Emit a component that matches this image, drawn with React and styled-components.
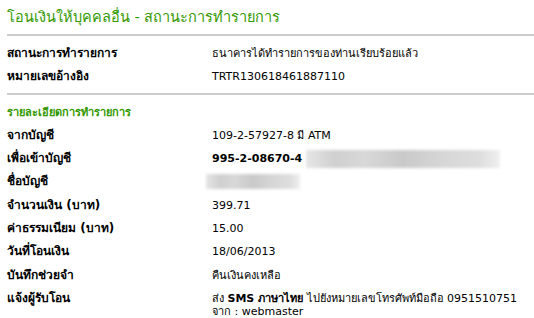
import React from "react";
import styled, { createGlobalStyle } from "styled-components";

const Global = createGlobalStyle`
  html, body { margin: 0; padding: 0; background: #fff; }
  body { font-family: "DejaVu Sans", Tahoma, sans-serif; font-size: 11px; color: #000; }
`;

const Page = styled.div`
  padding: 6px 0 0 7px;
  width: 527px;
`;

const Title = styled.h1`
  margin: 0;
  height: 28px;
  font-size: 14.5px;
  font-weight: normal;
  line-height: 22px;
  color: #339900;
`;

const Divider = styled.div`
  height: 2px;
  background: #cccccc;
`;

const Rows = styled.div`
  display: flex;
  flex-direction: column;
  padding: ${(p) => p.$pad || "6px 0 4px"};
`;

const Row = styled.div`
  display: grid;
  grid-template-columns: 205px 1fr;
  align-items: ${(p) => (p.$tall ? "start" : "center")};
  height: ${(p) => (p.$tall ? "auto" : "23.3px")};
  padding-top: ${(p) => (p.$tall ? "5px" : "0")};
  line-height: 13px;
`;

const Label = styled.div`
  font-weight: bold;
  font-size: 12px;
`;

const Value = styled.div`
  display: flex;
  flex-direction: column;
  font-weight: ${(p) => (p.$bold ? "bold" : "normal")};
`;

const Line = styled.div`
  display: flex;
  align-items: center;
  gap: 4px;
  height: 13px;
`;

const Section = styled.div`
  display: flex;
  align-items: center;
  height: 23px;
  font-weight: bold;
  font-size: 11px;
  color: #339900;
`;

const Blur = styled.span`
  display: inline-block;
  flex: none;
  width: ${(p) => p.$w}px;
  height: ${(p) => p.$h || 17}px;
  margin-left: ${(p) => p.$ml || 0}px;
  background: linear-gradient(
    90deg,
    #e6e6e6 0%,
    #cfcfcf 15%,
    #d8d8d8 30%,
    #c9c9c9 50%,
    #d6d6d6 70%,
    #dedede 90%,
    #f0f0f0 100%
  );
  filter: blur(1.5px);
`;

const B = styled.b`
  font-weight: bold;
`;

export default function App() {
  return (
    <>
      <Global />
      <Page>
        <Title>โอนเงินให้บุคคลอื่น - สถานะการทำรายการ</Title>
        <Divider />
        <Rows>
          <Row>
            <Label>สถานะการทำรายการ</Label>
            <Value>ธนาคารได้ทำรายการของท่านเรียบร้อยแล้ว</Value>
          </Row>
          <Row>
            <Label>หมายเลขอ้างอิง</Label>
            <Value>TRTR130618461887110</Value>
          </Row>
        </Rows>
        <Divider />
        <Rows $pad="6px 0 0">
          <Section>รายละเอียดการทำรายการ</Section>
          <Row>
            <Label>จากบัญชี</Label>
            <Value>109-2-57927-8 มี ATM</Value>
          </Row>
          <Row>
            <Label>เพื่อเข้าบัญชี</Label>
            <Value $bold>
              <Line>
                995-2-08670-4
                <Blur $w={194} $h={18} />
              </Line>
            </Value>
          </Row>
          <Row>
            <Label>ชื่อบัญชี</Label>
            <Value>
              <Line>
                <Blur $w={94} $h={15} $ml={-6} />
              </Line>
            </Value>
          </Row>
          <Row>
            <Label>จำนวนเงิน (บาท)</Label>
            <Value>399.71</Value>
          </Row>
          <Row>
            <Label>ค่าธรรมเนียม (บาท)</Label>
            <Value>15.00</Value>
          </Row>
          <Row>
            <Label>วันที่โอนเงิน</Label>
            <Value>18/06/2013</Value>
          </Row>
          <Row>
            <Label>บันทึกช่วยจำ</Label>
            <Value>คืนเงินคงเหลือ</Value>
          </Row>
          <Row $tall>
            <Label>แจ้งผู้รับโอน</Label>
            <Value>
              <span>
                ส่ง <B>SMS ภาษาไทย</B> ไปยังหมายเลขโทรศัพท์มือถือ 0951510751
              </span>
              <span>จาก : webmaster</span>
            </Value>
          </Row>
        </Rows>
      </Page>
    </>
  );
}
